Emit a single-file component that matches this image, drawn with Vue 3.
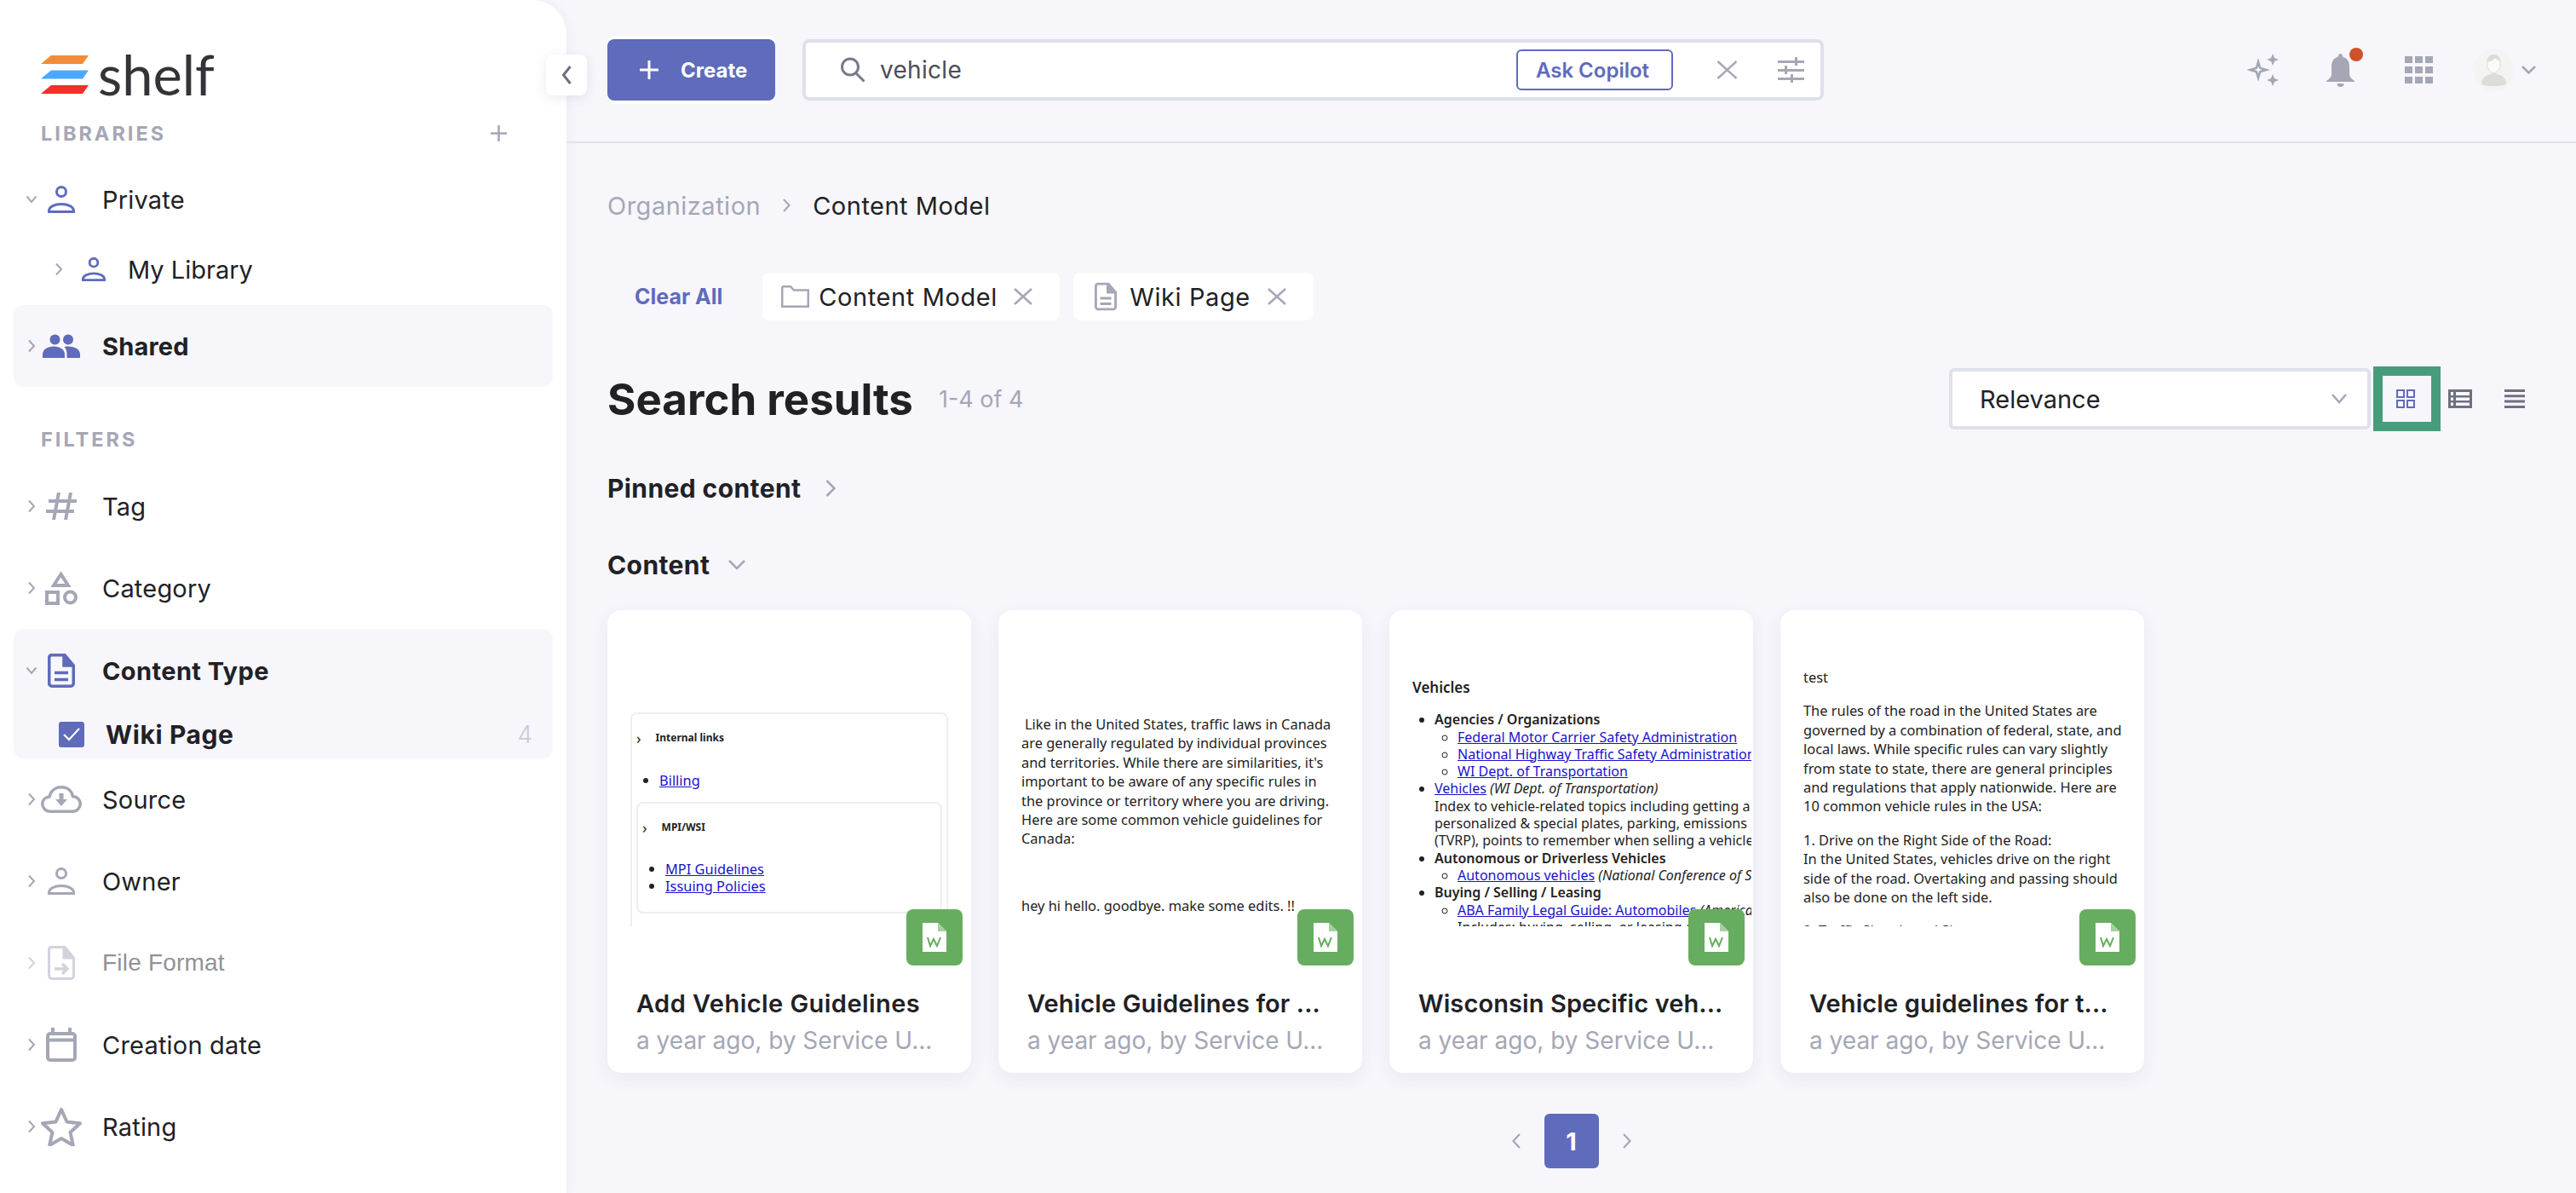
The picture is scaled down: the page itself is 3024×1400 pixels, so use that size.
<script setup>
const cardMeta = 'a year ago, by Service U...'
</script>

<template>
  <div class="page">
    <aside class="sidebar">
      <div class="logo">
        <svg class="logo-mark" width="56" height="45" viewBox="0 0 56 45">
          <path d="M12 0h44l-7 10H0z" fill="#f28c38" />
          <path d="M12 17.500h44l-7 10H0z" fill="#4aa8ff" />
          <path d="M12 35h44l-7 10H0z" fill="#ee3129" />
        </svg>
        <span class="logo-text">shelf</span>
      </div>

      <div class="sec-head libraries">
        <span>LIBRARIES</span>
        <svg width="21" height="21" viewBox="0 0 21 21"><path d="M10.5 1v19M1 10.5h19" stroke="#a5a7b6" stroke-width="2.5" fill="none" /></svg>
      </div>

      <div class="row private">
        <svg class="chev" width="14" height="10" viewBox="0 0 14 10"><path d="M1.500 1.500 7 8l5.500-6.500" /></svg>
        <span class="ico">
          <svg width="32" height="32" viewBox="0 0 32 32" fill="none" stroke="#5f6bbb" stroke-width="3"><circle cx="16" cy="7" r="5.500" /><path d="M1.500 30.500v-1c0-5 7-8 14.500-8s14.500 3 14.500 8v1z" /></svg>
        </span>
        <span class="label">Private</span>
      </div>
      <div class="row nested">
        <svg class="chev" width="10" height="16" viewBox="0 0 10 16"><path d="M2 1.500 8 8l-6 6.500" /></svg>
        <span class="ico">
          <svg width="28" height="28" viewBox="0 0 32 32" fill="none" stroke="#5f6bbb" stroke-width="3.200"><circle cx="16" cy="7" r="5.500" /><path d="M1.500 30.500v-1c0-5 7-8 14.500-8s14.500 3 14.500 8v1z" /></svg>
        </span>
        <span class="label">My Library</span>
      </div>
      <div class="row active shared">
        <svg class="chev" width="10" height="16" viewBox="0 0 10 16"><path d="M2 1.500 8 8l-6 6.500" /></svg>
        <span class="ico">
          <svg width="44" height="28" viewBox="0 0 44 28" fill="#5f6bbb"><circle cx="14.500" cy="6.500" r="6" /><circle cx="30" cy="6.500" r="6" /><path d="M0 28v-4c0-6 6-9.500 13-9.500s13 3.500 13 9.500v4z" /><path d="M28.500 28v-5c0-3-1-6-3-8 1.500-.5 3-.5 4.500-.5 8 0 14 3.500 14 9.500v4z" /></svg>
        </span>
        <span class="label">Shared</span>
      </div>

      <div class="sec-head filters"><span>FILTERS</span></div>

      <div class="row tag">
        <svg class="chev" width="10" height="16" viewBox="0 0 10 16"><path d="M2 1.500 8 8l-6 6.500" /></svg>
        <span class="ico">
          <svg width="36" height="32" viewBox="0 0 36 32" fill="none" stroke="#a5a7b6" stroke-width="4"><path d="M15 0 9 32M29 0l-6 32M3 10h33M0 22h33" /></svg>
        </span>
        <span class="label">Tag</span>
      </div>
      <div class="row">
        <svg class="chev" width="10" height="16" viewBox="0 0 10 16"><path d="M2 1.500 8 8l-6 6.500" /></svg>
        <span class="ico">
          <svg width="38" height="40" viewBox="0 0 38 40" fill="none" stroke="#a5a7b6" stroke-width="4"><path d="M18.500 4 10 17h17z" /><rect x="2" y="25" width="13" height="13" /><circle cx="29.500" cy="31" r="6.500" /></svg>
        </span>
        <span class="label">Category</span>
      </div>

      <div class="group">
        <div class="row group-head">
          <svg class="chev" width="14" height="10" viewBox="0 0 14 10"><path d="M1.500 1.500 7 8l5.500-6.500" /></svg>
          <span class="ico">
            <svg width="32" height="40" viewBox="0 0 32 40" fill="none" stroke="#5f6bbb" stroke-width="3.500"><path d="M4 1.750h16L30.250 14v21a3.200 3.200 0 0 1-3.200 3.250H5a3.200 3.200 0 0 1-3.250-3.250V5A3.200 3.200 0 0 1 4 1.750z" /><path d="M19 2v12h11" fill="#5f6bbb" /><path d="M8 22.500h16M8 30.500h16" /></svg>
          </span>
          <span class="label strong">Content Type</span>
        </div>
        <div class="wiki-row">
          <span class="check">
            <svg width="20" height="16" viewBox="0 0 20 16" fill="none" stroke="#fff" stroke-width="2.200"><path d="M1 8l6 6L19 1" /></svg>
          </span>
          <span class="label strong">Wiki Page</span>
          <span class="count">4</span>
        </div>
      </div>

      <div class="row">
        <svg class="chev" width="10" height="16" viewBox="0 0 10 16"><path d="M2 1.500 8 8l-6 6.500" /></svg>
        <span class="ico">
          <svg width="48" height="32" viewBox="0 0 48 32" fill="none" stroke="#a5a7b6" stroke-width="3.500"><path d="M11 30.250C5.500 30.250 1.750 26 1.750 21.500S5 13.500 10 13C11.500 6 17 1.750 24 1.750 31 1.750 36 6 37.500 12.500c5.500.5 8.750 4.500 8.750 9S42.500 30.250 37 30.250z" /><path d="M17 16h14l-7 8z" fill="#a5a7b6" stroke="none" /><rect x="21.500" y="9" width="5" height="9" fill="#a5a7b6" stroke="none" /></svg>
        </span>
        <span class="label">Source</span>
      </div>
      <div class="row">
        <svg class="chev" width="10" height="16" viewBox="0 0 10 16"><path d="M2 1.500 8 8l-6 6.500" /></svg>
        <span class="ico">
          <svg width="32" height="32" viewBox="0 0 32 32" fill="none" stroke="#a5a7b6" stroke-width="3"><circle cx="16" cy="7" r="5.500" /><path d="M1.500 30.500v-1c0-5 7-8 14.500-8s14.500 3 14.500 8v1z" /></svg>
        </span>
        <span class="label">Owner</span>
      </div>
      <div class="row disabled">
        <svg class="chev" width="10" height="16" viewBox="0 0 10 16"><path d="M2 1.500 8 8l-6 6.500" /></svg>
        <span class="ico">
          <svg width="32" height="40" viewBox="0 0 32 40" fill="none" stroke="#d2d3dc" stroke-width="3"><path d="M4 1.500h16L30.500 14v21a3.500 3.500 0 0 1-3.500 3.500H5A3.500 3.500 0 0 1 1.500 35V5A3.500 3.500 0 0 1 4 1.500z" /><path d="M19 2v12h11z" fill="#d2d3dc" /><path d="M8 27h14M17 21l6 6-6 6" stroke-width="3.500" /></svg>
        </span>
        <span class="label format">File Format</span>
      </div>
      <div class="row">
        <svg class="chev" width="10" height="16" viewBox="0 0 10 16"><path d="M2 1.500 8 8l-6 6.500" /></svg>
        <span class="ico">
          <svg width="36" height="40" viewBox="0 0 36 40" fill="none" stroke="#a5a7b6" stroke-width="4"><rect x="2" y="7" width="32" height="31" rx="3" /><path d="M2 14.500h32M8 0v7M28 0v7" /></svg>
        </span>
        <span class="label">Creation date</span>
      </div>
      <div class="row">
        <svg class="chev" width="10" height="16" viewBox="0 0 10 16"><path d="M2 1.500 8 8l-6 6.500" /></svg>
        <span class="ico">
          <svg width="48" height="46" viewBox="0 0 48 46" fill="none" stroke="#a5a7b6" stroke-width="4" stroke-linejoin="round"><path d="M24 3l6.500 14.500 15.500 1.700-11.500 10.500 3.300 15.300L24 37l-13.800 8 3.300-15.300L2 19.200l15.500-1.700z" /></svg>
        </span>
        <span class="label">Rating</span>
      </div>
    </aside>

    <button class="collapse">
      <svg width="12" height="24" viewBox="0 0 12 24" fill="none" stroke="#6e7080" stroke-width="3"><path d="M10.500 2 2.500 12l8 10" /></svg>
    </button>

    <main class="main">
      <header class="topbar">
        <button class="create">
          <svg width="24" height="24" viewBox="0 0 24 24"><path d="M12 1v22M1 12h22" stroke="#fff" stroke-width="3" fill="none" /></svg>
          <span>Create</span>
        </button>
        <div class="search">
          <svg width="30" height="30" viewBox="0 0 30 30" fill="none" stroke="#77798a" stroke-width="3"><circle cx="12" cy="11.500" r="9.500" /><path d="M19 19l9.500 9.500" /></svg>
          <span class="query">vehicle</span>
          <button class="copilot">Ask Copilot</button>
          <svg class="clear" width="25" height="22" viewBox="0 0 25 22" fill="none" stroke="#a5a7b6" stroke-width="2.500"><path d="M1.500 1l22 20M23.500 1l-22 20" /></svg>
          <svg width="31" height="30" viewBox="0 0 31 30" fill="#a5a7b6"><path d="M0 4h20v3H0zM23 4h8v3h-8zM20 0h3v10h-3zM0 14h8v3H0zM11 14h20v3H11zM8 10h3v10H8zM0 24h15v3H0zM18 24h13v3H18zM15 20h3v10h-3z" /></svg>
        </div>
        <div class="actions">
          <svg width="39" height="38" viewBox="0 0 39 38" fill="#a5a7b6"><path d="M14 5l3.200 10.800L28 19l-10.800 3.200L14 33l-3.200-10.800L0 19l10.800-3.200z" /><path d="M14 14.500l1.200 3.300 3.300 1.200-3.300 1.200-1.200 3.300-1.200-3.300L9.500 19l3.300-1.200z" fill="#f6f6fb" /><path d="M31 0l2 5 5 2-5 2-2 5-2-5-5-2 5-2zM31 24l2 5 5 2-5 2-2 5-2-5-5-2 5-2z" /></svg>
          <span class="bell">
            <svg width="33" height="39" viewBox="0 0 33 39" fill="#a5a7b6"><path d="M16.500 0c1.500 0 2.500 1 2.500 2.500v1c5.500 1.500 8 6 8 11.500v9c0 3 2 5 6 8v1H0v-1c4-3 6-5 6-8v-9C6 9.500 8.500 5 14 3.500v-1C14 1 15 0 16.500 0z" /><path d="M12.500 35h8a4 4 0 0 1-8 0z" /></svg>
            <i class="dot"></i>
          </span>
          <svg class="apps" width="33" height="32" viewBox="0 0 33 32" fill="#a5a7b6"><path d="M0 0h9v8H0zM12 0h9v8h-9zM24 0h9v8h-9zM0 12h9v8H0zM12 12h9v8h-9zM24 12h9v8h-9zM0 24h9v8H0zM12 24h9v8h-9zM24 24h9v8h-9z" /></svg>
          <span class="avatar">
            <svg width="47" height="49" viewBox="0 0 47 49"><ellipse cx="23.500" cy="24.500" rx="23.500" ry="24.500" fill="#f4f4f2" /><path d="M9 41c0-9 6-11 14.500-13.500C32 30 38 32 38 41c-8 3-21 3-29 0z" fill="#dcdcda" /><ellipse cx="23.500" cy="17" rx="8" ry="10.500" fill="#fbfbfa" stroke="#dcdcda" stroke-width="1" /><path d="M15.500 15c0-6 4-9 8-9s8 3 8 8c-4-1-6-4-7-4-1 3-5 4-9 5z" fill="#dcdcda" /></svg>
          </span>
          <svg class="user-chev" width="17" height="10" viewBox="0 0 17 10" fill="none" stroke="#a5a7b6" stroke-width="2.500"><path d="M1 1l7.500 7.500L16 1" /></svg>
        </div>
      </header>

      <section class="content">
        <nav class="crumbs">
          <span class="crumb-root">Organization</span>
          <svg width="9" height="16" viewBox="0 0 9 16" fill="none" stroke="#a5a7b6" stroke-width="2"><path d="M1 1l6.500 7L1 15" /></svg>
          <span>Content Model</span>
        </nav>

        <div class="chips">
          <span class="clear-all">Clear All</span>
          <span class="chip chip-model">
            <svg width="33" height="26" viewBox="0 0 33 26" fill="none" stroke="#a5a7b6" stroke-width="2.500"><path d="M1.250 24.750V3a1.750 1.750 0 0 1 1.750-1.750h8L15 5.500h16.750v19.250z" /></svg>
            <span>Content Model</span>
            <svg class="x" width="22" height="20" viewBox="0 0 22 20" fill="none" stroke="#a5a7b6" stroke-width="2.500"><path d="M1 1l20 18M21 1L1 19" /></svg>
          </span>
          <span class="chip chip-wiki">
            <svg width="26" height="34" viewBox="0 0 32 40" fill="none" stroke="#a5a7b6" stroke-width="3.500"><path d="M4 1.750h16L30.250 14v21a3.200 3.200 0 0 1-3.200 3.250H5a3.200 3.200 0 0 1-3.250-3.250V5A3.200 3.200 0 0 1 4 1.750z" /><path d="M19 2v12h11" fill="#a5a7b6" /><path d="M8 22.500h16M8 30.500h16" /></svg>
            <span>Wiki Page</span>
            <svg class="x" width="22" height="20" viewBox="0 0 22 20" fill="none" stroke="#a5a7b6" stroke-width="2.500"><path d="M1 1l20 18M21 1L1 19" /></svg>
          </span>
        </div>

        <div class="results-head">
          <h1>Search results</h1>
          <span class="range">1-4 of 4</span>
          <div class="sort">
            <span>Relevance</span>
            <svg width="18" height="12" viewBox="0 0 18 12" fill="none" stroke="#a5a7b6" stroke-width="2.500"><path d="M1 1l8 9 8-9" /></svg>
          </div>
          <button class="view view-on">
            <svg width="22" height="22" viewBox="0 0 22 22" fill="none" stroke="#5f6bbb" stroke-width="2"><rect x="1" y="1" width="8" height="8" /><rect x="13" y="1" width="8" height="8" /><rect x="1" y="13" width="8" height="8" /><rect x="13" y="13" width="8" height="8" /></svg>
          </button>
          <svg class="view-list" width="28" height="22" viewBox="0 0 28 22" fill="#6e7080"><path d="M0 0h28v22H0zM3 3v4h3V3zm6 0v4h16V3zM3 9.500v3.500h3V9.500zm6 0v3.500h16V9.500zM3 15.500V19h3v-3.500zm6 0V19h16v-3.500z" fill-rule="evenodd" /></svg>
          <svg class="view-lines" width="24" height="22" viewBox="0 0 24 22" fill="#6e7080"><path d="M0 0h24v3H0zM0 6.300h24v3H0zM0 12.600h24v3H0zM0 19h24v3H0z" /></svg>
        </div>

        <div class="section-title pinned">
          <span>Pinned content</span>
          <svg width="12" height="20" viewBox="0 0 12 20" fill="none" stroke="#a5a7b6" stroke-width="2.500"><path d="M1.500 1l9 9-9 9" /></svg>
        </div>
        <div class="section-title sub">
          <span>Content</span>
          <svg width="20" height="12" viewBox="0 0 20 12" fill="none" stroke="#a5a7b6" stroke-width="2.500"><path d="M1 1l9 9 9-9" /></svg>
        </div>

        <div class="cards">
          <article class="card">
            <div class="preview preview-links">
              <div class="outer-box">
                <div class="toggle first"><span class="tri">›</span><b>Internal links</b></div>
                <ul class="billing"><li><a>Billing</a></li></ul>
                <div class="inner-box">
                  <div class="toggle"><span class="tri">›</span><b>MPI/WSI</b></div>
                  <ul class="mpi">
                    <li><a>MPI Guidelines</a></li>
                    <li><a>Issuing Policies</a></li>
                  </ul>
                </div>
              </div>
            </div>
            <span class="badge"><svg width="28" height="34" viewBox="0 0 28 34"><path d="M0 0h18l10 10v24H0z" fill="#fff" /><path d="M18 0v10h10z" fill="#a7d09f" /><path d="M6 17l3 10 4-8 4 8 4-10" fill="none" stroke="#67ad5f" stroke-width="2" /></svg></span>
            <h3>Add Vehicle Guidelines</h3>
            <p class="meta">{{ cardMeta }}</p>
          </article>

          <article class="card">
            <div class="preview preview-canada">
              <p class="indent">Like in the United States, traffic laws in Canada<br />are generally regulated by individual provinces<br />and territories. While there are similarities, it's<br />important to be aware of any specific rules in<br />the province or territory where you are driving.<br />Here are some common vehicle guidelines for<br />Canada:</p>
              <p class="bye">hey hi hello. goodbye. make some edits. !!</p>
            </div>
            <span class="badge"><svg width="28" height="34" viewBox="0 0 28 34"><path d="M0 0h18l10 10v24H0z" fill="#fff" /><path d="M18 0v10h10z" fill="#a7d09f" /><path d="M6 17l3 10 4-8 4 8 4-10" fill="none" stroke="#67ad5f" stroke-width="2" /></svg></span>
            <h3 class="tight">Vehicle Guidelines for ...</h3>
            <p class="meta">{{ cardMeta }}</p>
          </article>

          <article class="card">
            <div class="preview preview-wi">
              <b class="wi-title">Vehicles</b>
              <ul>
                <li><b>Agencies / Organizations</b>
                  <ul>
                    <li><a>Federal Motor Carrier Safety Administration</a></li>
                    <li><a>National Highway Traffic Safety Administration</a></li>
                    <li><a>WI Dept. of Transportation</a></li>
                  </ul>
                </li>
                <li><a>Vehicles</a> <i>(WI Dept. of Transportation)</i><br />Index to vehicle-related topics including getting a<br />personalized &amp; special plates, parking, emissions<br />(TVRP), points to remember when selling a vehicle</li>
                <li><b>Autonomous or Driverless Vehicles</b>
                  <ul><li><a>Autonomous vehicles</a> <i>(National Conference of State</i></li></ul>
                </li>
                <li><b>Buying / Selling / Leasing</b>
                  <ul><li><a>ABA Family Legal Guide: Automobiles</a> <i>(American Bar</i><br />Includes: buying, selling, or leasing a car</li></ul>
                </li>
              </ul>
            </div>
            <span class="badge"><svg width="28" height="34" viewBox="0 0 28 34"><path d="M0 0h18l10 10v24H0z" fill="#fff" /><path d="M18 0v10h10z" fill="#a7d09f" /><path d="M6 17l3 10 4-8 4 8 4-10" fill="none" stroke="#67ad5f" stroke-width="2" /></svg></span>
            <h3 class="tight">Wisconsin Specific veh...</h3>
            <p class="meta">{{ cardMeta }}</p>
          </article>

          <article class="card">
            <div class="preview preview-usa">
              <p>test</p>
              <p class="usa-rules">The rules of the road in the United States are<br />governed by a combination of federal, state, and<br />local laws. While specific rules can vary slightly<br />from state to state, there are general principles<br />and regulations that apply nationwide. Here are<br />10 common vehicle rules in the USA:</p>
              <p class="usa-rules">1. Drive on the Right Side of the Road:<br />In the United States, vehicles drive on the right<br />side of the road. Overtaking and passing should<br />also be done on the left side.</p>
              <p class="usa-rules">2. Traffic Signals and Signs:</p>
            </div>
            <span class="badge"><svg width="28" height="34" viewBox="0 0 28 34"><path d="M0 0h18l10 10v24H0z" fill="#fff" /><path d="M18 0v10h10z" fill="#a7d09f" /><path d="M6 17l3 10 4-8 4 8 4-10" fill="none" stroke="#67ad5f" stroke-width="2" /></svg></span>
            <h3 class="tight">Vehicle guidelines for t...</h3>
            <p class="meta">{{ cardMeta }}</p>
          </article>
        </div>

        <div class="pager">
          <svg width="10" height="18" viewBox="0 0 10 18" fill="none" stroke="#a5a7b6" stroke-width="2.200"><path d="M9 1 1.500 9 9 17" /></svg>
          <span class="page-num">1</span>
          <svg width="10" height="18" viewBox="0 0 10 18" fill="none" stroke="#a5a7b6" stroke-width="2.200"><path d="M1 1l7.500 8L1 17" /></svg>
        </div>
      </section>
    </main>
  </div>
</template>

<style>
html,
body {
  background: #f6f6fb;
}
</style>

<style scoped>
.page {
  position: relative;
  display: flex;
  width: 3024px;
  height: 1400px;
  overflow: hidden;
  background: #f6f6fb;
  color: #212125;
  font-family: Inter, "Noto Sans", sans-serif;
}

/* sidebar */
.sidebar {
  flex: 0 0 665px;
  box-sizing: border-box;
  padding-top: 65px;
  background: #fff;
  border-top-right-radius: 40px;
  box-shadow: 2px 0 12px rgba(60, 60, 110, 0.05);
}

.logo {
  display: flex;
  align-items: center;
  gap: 11px;
  height: 45px;
  padding-left: 48px;
}

.logo-text {
  font-family: Lato, sans-serif;
  font-size: 65px;
  line-height: 45px;
  color: #333338;
}

.sec-head {
  display: flex;
  align-items: center;
  justify-content: space-between;
  height: 32px;
  padding: 0 69px 0 48px;
  color: #a5a7b6;
  font-size: 23.5px;
  font-weight: 700;
  letter-spacing: 3px;
}

.libraries {
  margin-top: 30px;
}

.filters {
  margin-top: 45px;
}

.row {
  display: flex;
  align-items: center;
  height: 96px;
  margin: 0 16px;
  padding-left: 10px;
  border-radius: 12px;
}

.tag {
  margin-top: 15px;
}

.chev {
  flex: 0 0 22px;
  fill: none;
  stroke: #a5a7b6;
  stroke-width: 2;
}

.ico {
  display: flex;
  align-items: center;
  justify-content: center;
  flex: 0 0 48px;
  margin-right: 24px;
}

.label {
  font-size: 29px;
  letter-spacing: 0.2px;
  white-space: nowrap;
}

.strong {
  font-weight: 700;
  letter-spacing: 0.4px;
}

.wiki-row .strong {
  font-size: 30px;
  letter-spacing: 0.6px;
}

.private {
  height: 90px;
  margin-top: 17px;
}

.nested {
  height: 74px;
  padding-left: 42px;
}

.nested .ico {
  flex-basis: 60px;
  margin-right: 10px;
}

.nested .label {
  letter-spacing: 0;
}

.active {
  background: #f6f6fb;
}

.shared {
  margin-top: 5px;
}

.shared .label {
  font-weight: 700;
}

.group {
  height: 152px;
  margin: 0 16px;
  background: #f6f6fb;
  border-radius: 12px;
}

.group-head {
  height: 98px;
  margin: 0;
}

.wiki-row {
  display: flex;
  align-items: center;
  height: 52px;
  padding: 0 24px 0 53px;
}

.check {
  display: flex;
  align-items: center;
  justify-content: center;
  width: 30px;
  height: 30px;
  margin-right: 25px;
  background: #5f6bbb;
  border-radius: 3px;
}

.count {
  margin-left: auto;
  color: #c9cad5;
  font-size: 28px;
  font-weight: 300;
}

.disabled .chev {
  stroke: #d2d3dc;
}

.format {
  font-family: "Liberation Sans", Arial, sans-serif;
  color: #919198;
  font-size: 28px;
}

.collapse {
  position: absolute;
  top: 64px;
  left: 641px;
  display: flex;
  align-items: center;
  justify-content: center;
  width: 48px;
  height: 48px;
  padding: 0;
  background: #fff;
  border: 0;
  border-radius: 8px;
  box-shadow: 0 3px 14px rgba(60, 60, 110, 0.1);
}

/* top bar */
.main {
  flex: 1;
  min-width: 0;
}

.topbar {
  display: flex;
  align-items: center;
  box-sizing: border-box;
  height: 168px;
  padding: 0 47px 2px 48px;
  border-bottom: 2px solid #e1e2ea;
}

.create {
  display: flex;
  align-items: center;
  gap: 25px;
  width: 197px;
  height: 72px;
  padding: 0 0 0 37px;
  color: #fff;
  font-family: inherit;
  font-size: 24px;
  font-weight: 700;
  background: #5f6bbb;
  border: 0;
  border-radius: 8px;
  box-shadow: 0 -4px 0 #fff, 0 4px 0 #fff;
}

.search {
  display: flex;
  align-items: center;
  box-sizing: border-box;
  width: 1199px;
  height: 72px;
  margin-left: 32px;
  padding: 0 19px 0 40px;
  background: #fff;
  border: 4px solid #dfe1ea;
  border-radius: 8px;
}

.query {
  margin-left: 17px;
  font-size: 28px;
  letter-spacing: 0.3px;
  color: #4d4d55;
}

.copilot {
  box-sizing: border-box;
  width: 184px;
  height: 48px;
  margin-left: auto;
  padding: 0 5px 0 0;
  color: #5f6bbb;
  font-family: inherit;
  font-size: 24px;
  font-weight: 600;
  background: #fff;
  border: 2px solid #5f6bbb;
  border-radius: 6px;
}

.clear {
  margin: 0 47px 0 51px;
}

.actions {
  display: flex;
  align-items: center;
  margin-left: auto;
}

.bell {
  position: relative;
  display: flex;
  margin-left: 55px;
}

.dot {
  position: absolute;
  top: -7px;
  left: 27px;
  width: 16px;
  height: 16px;
  background: #d0522a;
  border-radius: 50%;
}

.apps {
  margin-left: 59px;
}

.avatar {
  display: flex;
  margin-left: 48px;
}

.user-chev {
  margin-left: 9px;
}

/* content */
.content {
  padding: 0 60px 0 48px;
}

.crumbs {
  display: flex;
  align-items: center;
  gap: 26px;
  height: 40px;
  margin-top: 53px;
  font-size: 29px;
  letter-spacing: 0.5px;
  white-space: nowrap;
}

.crumb-root {
  color: #a5a7b6;
}

.chips {
  display: flex;
  align-items: center;
  height: 56px;
  margin-top: 59px;
  font-size: 29px;
  letter-spacing: 0.6px;
}

.clear-all {
  margin: 0 47px 0 32px;
  color: #5f6bbb;
  font-size: 25px;
  font-weight: 700;
  letter-spacing: 0;
}

.chip {
  display: flex;
  align-items: center;
  box-sizing: border-box;
  height: 56px;
  background: #fff;
  border-radius: 8px;
}

.chip-model {
  width: 349px;
  margin-right: 16px;
  padding-left: 22px;
  gap: 11px;
}

.chip-wiki {
  width: 282px;
  padding-left: 25px;
  gap: 15px;
}

.x {
  margin-left: auto;
  margin-right: 32px;
}

.results-head {
  display: flex;
  align-items: center;
  height: 76px;
  margin-top: 54px;
}

.results-head h1 {
  margin: 0;
  font-size: 51px;
  font-weight: 700;
  white-space: nowrap;
}

.range {
  margin-left: 30px;
  color: #a5a7b6;
  font-size: 27px;
}

.sort {
  display: flex;
  align-items: center;
  justify-content: space-between;
  box-sizing: border-box;
  width: 495px;
  height: 72px;
  margin-left: auto;
  padding: 0 24px 0 32px;
  font-size: 29px;
  background: #fff;
  border: 4px solid #dfe2eb;
  border-radius: 6px;
}

.view {
  display: flex;
  align-items: center;
  justify-content: center;
  padding: 0;
}

.view-on {
  box-sizing: border-box;
  width: 79px;
  height: 76px;
  margin-left: 3px;
  padding-right: 4px;
  background: transparent;
  border: 11px solid #479c7c;
}

.view-list {
  margin-left: 9px;
}

.view-lines {
  margin-left: 38px;
}

.section-title {
  display: flex;
  align-items: center;
  height: 40px;
  font-size: 30px;
  font-weight: 700;
  letter-spacing: 0.4px;
}

.pinned {
  margin-top: 47px;
  gap: 29px;
}

.sub {
  margin-top: 50px;
  gap: 22px;
}

/* cards */
.cards {
  display: flex;
  gap: 32px;
  margin-top: 33px;
}

.card {
  position: relative;
  flex: 0 0 427px;
  box-sizing: border-box;
  width: 427px;
  min-width: 0;
  height: 543px;
  background: #fff;
  border-radius: 16px;
  box-shadow: 0 6px 22px rgba(60, 60, 110, 0.07);
}

.preview {
  box-sizing: border-box;
  width: 427px;
  height: 371px;
  overflow: hidden;
  border-radius: 16px 16px 0 0;
  color: #222;
  font-family: "Noto Sans", "Open Sans", sans-serif;
  font-size: 16.4px;
  line-height: 22.4px;
  white-space: nowrap;
}

.preview p {
  margin: 0;
}

.preview a {
  color: #1a12cc;
  text-decoration: underline;
}

.preview-links {
  padding: 120px 27px 0;
}

.outer-box {
  box-sizing: border-box;
  height: 300px;
  padding: 0 5px;
  border: 2px solid #eeeeee;
  border-bottom: 0;
  border-radius: 8px 8px 0 0;
}

.toggle {
  display: flex;
  align-items: center;
  gap: 17px;
  height: 20px;
  margin-top: 18px;
  font-size: 12px;
}

.tri {
  font-size: 18px;
  line-height: 20px;
}

.billing {
  margin: 30px 0 0;
  padding-left: 27px;
  line-height: 20px;
}

.inner-box {
  box-sizing: border-box;
  height: 131px;
  margin-top: 15px;
  padding: 0 5px;
  border: 2px solid #eeeeee;
  border-radius: 8px;
}

.mpi {
  margin: 29px 0 0;
  padding-left: 27px;
  line-height: 20px;
}

.preview-canada {
  padding: 123px 27px 0;
}

.indent {
  text-indent: 4px;
}

.bye {
  margin-top: 56px !important;
}

.preview-wi {
  width: 425px;
  padding: 81px 0 0 27px;
  font-size: 16px;
  line-height: 20.3px;
}

.wi-title {
  display: block;
  font-size: 17px;
  font-weight: 600;
}

.preview-wi b {
  font-weight: 600;
}

.preview-wi ul {
  margin: 0;
  padding-left: 26px;
}

.preview-wi > ul {
  margin-top: 17px;
}

.preview-wi ul ul {
  padding-left: 27px;
  list-style: circle;
}

.preview-usa {
  padding: 68px 20px 0 27px;
}

.usa-rules {
  margin-top: 17px !important;
}

.badge {
  position: absolute;
  top: 351px;
  right: 10px;
  display: flex;
  align-items: center;
  justify-content: center;
  width: 66px;
  height: 66px;
  background: #67ad5f;
  border-radius: 8px;
}

.card h3 {
  margin: 71px 0 0;
  padding-left: 34px;
  font-size: 29px;
  font-weight: 600;
  line-height: 40px;
  letter-spacing: 0.45px;
  white-space: nowrap;
}

.card h3.tight {
  letter-spacing: 0.1px;
}

.meta {
  margin: 3px 0 0;
  padding-left: 34px;
  color: #a5a7b6;
  font-size: 28px;
  line-height: 40px;
  white-space: nowrap;
}

.pager {
  display: flex;
  align-items: center;
  justify-content: center;
  gap: 28px;
  width: 427px;
  margin: 48px 0 0 918px;
}

.page-num {
  display: flex;
  align-items: center;
  justify-content: center;
  width: 64px;
  height: 64px;
  color: #fff;
  font-size: 29px;
  font-weight: 700;
  background: #5f6bbb;
  border-radius: 6px;
}
</style>
